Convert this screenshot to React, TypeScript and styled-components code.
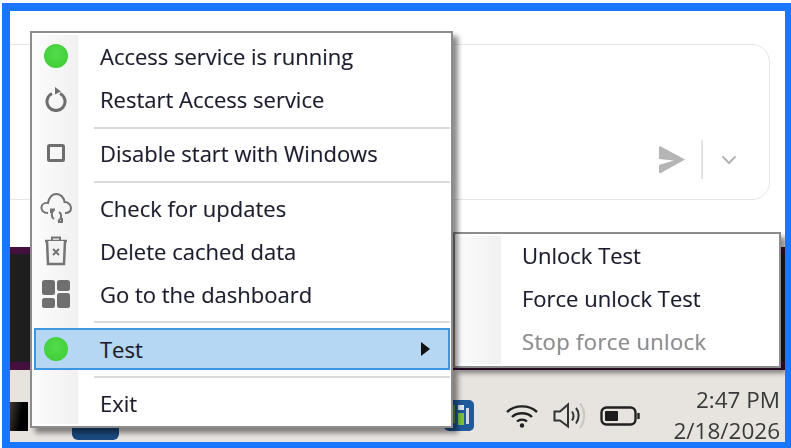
import React from "react";
import styled, { createGlobalStyle } from "styled-components";

const Global = createGlobalStyle`
  html, body { margin: 0; padding: 0; background: #fff; overflow: hidden; }
  body { width: 791px; height: 448px; font-family: "Open Sans", "Noto Sans", sans-serif; }
`;

const Frame = styled.div`
  position: relative;
  box-sizing: border-box;
  margin: 3px 0 0 2px;
  width: 789px;
  height: 445px;
  border: solid #1a75ff;
  border-width: 8px 6px 6px 8px;
  display: flex;
  flex-direction: column;
  overflow: hidden;
`;

const Content = styled.div`
  flex: 1;
  display: flex;
  flex-direction: column;
  position: relative;
  filter: blur(0.55px);
`;

const ChatArea = styled.div`
  height: 236px;
  flex: none;
  background: #fff;
  padding: 33px 15px 0 0;
  box-sizing: border-box;
`;

const Card = styled.div`
  box-sizing: border-box;
  height: 156px;
  margin-left: -20px;
  border: 1.5px solid #e6e6e6;
  border-radius: 18px;
  display: flex;
  align-items: flex-end;
  justify-content: flex-end;
  padding: 0 32px 20px 0;
`;

const Actions = styled.div`
  display: flex;
  align-items: center;
`;

const Divider = styled.div`
  width: 2px;
  height: 39px;
  margin: 0 18px 0 15px;
  background: #e4e4e4;
`;

const Desktop = styled.div`
  height: 123px;
  flex: none;
  box-sizing: border-box;
  background: #1e1e1e;
  border-top: 7px solid #43103f;
  border-bottom: 8px solid #43103f;
`;

const Taskbar = styled.div`
  flex: 1;
  background: #e7e3df;
  display: flex;
  align-items: flex-end;
  color: #3a3a3a;
`;

const Thumb = styled.div`
  width: 18px;
  height: 29px;
  margin-bottom: 11px;
  background: linear-gradient(100deg, #3a3a3a 0%, #000 60%);
  flex: none;
`;

const AppIcon = styled.div`
  width: 47px;
  height: 20px;
  margin: 0 0 2px 44px;
  background: #1b4a80;
  border-radius: 0 0 6px 6px;
  flex: none;
`;

const Tray = styled.div`
  margin-left: auto;
  display: flex;
  align-items: center;
  height: 72px;
`;

const TrayApp = styled.div`
  width: 30px;
  height: 31px;
  margin: 18px 32px 0 0;
  background: #1f5a9c;
  border-radius: 5px;
  display: flex;
  align-items: center;
  justify-content: center;
`;

const TrayIcon = styled.div<{ $gap: number }>`
  display: flex;
  margin: 20px ${(p) => p.$gap}px 0 0;
`;

const Clock = styled.div`
  margin-right: 5px;
  text-align: right;
  font-size: 22.5px;
  line-height: 31px;
  padding-top: 17px;
`;

const Menu = styled.div<{ $left: number; $top: number; $width: number; $z: number; $pad: string }>`
  position: absolute;
  left: ${(p) => p.$left}px;
  top: ${(p) => p.$top}px;
  width: ${(p) => p.$width}px;
  z-index: ${(p) => p.$z};
  box-sizing: border-box;
  padding: ${(p) => p.$pad};
  border: 2px solid #8c8c8c;
  background: #fff;
  box-shadow: 5px 5px 5px rgba(0, 0, 0, 0.45);
`;

const Gutter = styled.div`
  position: absolute;
  left: 0;
  top: 2px;
  bottom: 2px;
  width: 46px;
  background: linear-gradient(90deg, #fcfcfc, #f1f1f1);
`;

const Row = styled.div<{ $selected?: boolean; $disabled?: boolean }>`
  position: relative;
  box-sizing: border-box;
  height: ${(p) => (p.$selected ? 42 : 43)}px;
  margin: ${(p) => (p.$selected ? "0 1px 0 2px" : "0")};
  display: flex;
  align-items: center;
  font-size: 22px;
  letter-spacing: ${(p) => (p.$disabled ? 0.35 : 0)}px;
  color: ${(p) => (p.$disabled ? "#8f8f8f" : "#1c1c2c")};
  text-shadow: -0.5px 0 rgba(170, 80, 0, 0.22), 0.5px 0 rgba(0, 90, 200, 0.22);
  background: ${(p) => (p.$selected ? "#b5d7f3" : "transparent")};
  border: ${(p) => (p.$selected ? "2px solid #3d96e0" : "none")};
`;

const IconCell = styled.div<{ $selected?: boolean }>`
  width: ${(p) => (p.$selected ? 64 : 68)}px;
  flex: none;
  padding-right: ${(p) => (p.$selected ? 4 : 0)}px;
  display: flex;
  justify-content: center;
  box-sizing: border-box;
`;

const Dot = styled.div`
  width: 24px;
  height: 24px;
  margin-left: -21px;
  border-radius: 50%;
  background: radial-gradient(circle at 50% 40%, #52dc4a, #3ccb35);
`;

const Label = styled.span`
  white-space: nowrap;
`;

const SubLabel = styled.span`
  margin-left: 67px;
  padding-bottom: 2px;
  white-space: nowrap;
`;

const Arrow = styled.div`
  margin-left: auto;
  margin-right: 18px;
  width: 0;
  height: 0;
  border-left: 9px solid #111;
  border-top: 7px solid transparent;
  border-bottom: 7px solid transparent;
`;

const Separator = styled.div<{ $before: number; $after: number }>`
  height: 2px;
  margin: ${(p) => p.$before}px 1px ${(p) => p.$after}px 62px;
  background: #d9d9d9;
`;

const GlyphBox = styled.div`
  display: flex;
  margin-left: -21px;
  position: relative;
`;

const RestartIcon = () => (
  <svg width="24" height="26" viewBox="0 0 24 26" fill="none" stroke="#6e6e6e" strokeWidth="3">
    <path d="M8 7.5 A9 9 0 1 0 16 7.5" />
    <path d="M11 1 L17 5.5 L11 8.5 Z" fill="#6e6e6e" stroke="none" />
  </svg>
);

const SquareIcon = () => (
  <svg width="18" height="18" viewBox="0 0 18 18" fill="none" stroke="#6e6e6e" strokeWidth="3">
    <rect x="1.5" y="1.5" width="15" height="15" rx="1" />
  </svg>
);

const CloudIcon = () => (
  <svg width="32" height="32" viewBox="0 0 32 32" fill="none" stroke="#727272" strokeWidth="2">
    <path d="M8 21 C3 21 1 18 1.500 15 C2 12 5 10.500 8 11 C9 6 12 2 16.500 2 C21 2 24 6 24.500 10 C28 10 31 12.500 31 16 C31 19 29 21 25 21" />
    <path d="M14 18 C11 20 11 25 14 27 M11 21 L11 17.500 L15 17.500" />
    <path d="M19 20 C22 22 22 27 18 29 M22 26 L22 30 L18 30" />
  </svg>
);

const TrashIcon = () => (
  <svg width="24" height="30" viewBox="0 0 24 30" fill="none" stroke="#747474" strokeWidth="2.500">
    <path d="M1 5 H23" />
    <path d="M8 4 V1.500 H16 V4" strokeWidth="2" />
    <path d="M3 5 L4 28 H20 L21 5" fill="#f3f3f3" />
    <path d="M9 13 L15 19 M15 13 L9 19" strokeWidth="2" />
  </svg>
);

const DashIcon = () => (
  <svg width="28" height="28" viewBox="0 0 28 28" fill="#6f6f6f">
    <rect x="0" y="0" width="13" height="15" rx="2.500" />
    <rect x="15" y="0" width="13" height="11" rx="2.500" />
    <rect x="0" y="18" width="13" height="10" rx="2.500" />
    <rect x="15" y="13" width="13" height="15" rx="2.500" />
  </svg>
);

const SendIcon = () => (
  <svg width="28" height="28" viewBox="0 0 28 28" fill="#b5b5b5">
    <path d="M1 1.500 C1 0.500 1.800 0 2.800 0.400 L27 13.500 L2.800 27 C1.800 27.500 1 27 1 26 V19 L16 14.500 L1 13 Z" />
  </svg>
);

const ChevronIcon = () => (
  <svg width="16" height="10" viewBox="0 0 16 10" fill="none" stroke="#b5b5b5" strokeWidth="2">
    <path d="M1.500 1.500 L8 8 L14.500 1.500" />
  </svg>
);

const WifiIcon = () => (
  <svg width="32" height="24" viewBox="0 0 32 24" fill="none" stroke="#222" strokeWidth="2.400">
    <path d="M1 8 C9 0.500 23 0.500 31 8" />
    <path d="M6 13 C11 8 21 8 26 13" />
    <path d="M11 17.500 C13.500 15 18.500 15 21 17.500" />
    <circle cx="16" cy="21.500" r="2.200" fill="#222" stroke="none" />
  </svg>
);

const SpeakerIcon = () => (
  <svg width="33" height="30" viewBox="0 0 33 30" fill="none" stroke="#333" strokeWidth="2">
    <path d="M1.500 10.500 H7 L15 3.500 V25.500 L7 19.500 H1.500 Z" />
    <path d="M19 10.500 C21 13 21 17 19 19.500" />
    <path d="M23 7 C26.500 11 26.500 18 23 22.500" />
    <path d="M27 2.500 C32.500 9 32.500 20 27 27" stroke="#c9c6c3" />
  </svg>
);

const BatteryIcon = () => (
  <svg width="40" height="20" viewBox="0 0 40 20" fill="none">
    <rect x="1.500" y="1.500" width="34" height="17" rx="5" stroke="#222" strokeWidth="2.400" />
    <rect x="5" y="5" width="13" height="10" rx="1" fill="#1c1c1c" />
    <path d="M38.500 7 V13" stroke="#222" strokeWidth="2.400" />
  </svg>
);

const TrayAppIcon = () => (
  <svg width="30" height="31" viewBox="0 0 30 31">
    <rect x="4" y="5" width="7" height="18" fill="#6e9f3b" />
    <rect x="14" y="5" width="6" height="5" fill="#dfe8ee" />
    <rect x="14" y="13" width="6" height="12" fill="#7fc241" />
    <rect x="22" y="8" width="3" height="16" fill="#cfdbe6" />
  </svg>
);

const mainRows = [
  { label: "Access service is running", icon: <Dot /> },
  { label: "Restart Access service", icon: <GlyphBox><RestartIcon /></GlyphBox> },
];

const tools = [
  { label: "Check for updates", icon: <GlyphBox><CloudIcon /></GlyphBox> },
  { label: "Delete cached data", icon: <GlyphBox><TrashIcon /></GlyphBox> },
  { label: "Go to the dashboard", icon: <GlyphBox><DashIcon /></GlyphBox> },
];

const subRows = [
  { label: "Unlock Test", disabled: false },
  { label: "Force unlock Test", disabled: false },
  { label: "Stop force unlock", disabled: true },
];

export default function App() {
  return (
    <>
      <Global />
      <Frame>
        <Content>
          <ChatArea>
            <Card>
              <Actions>
                <SendIcon />
                <Divider />
                <ChevronIcon />
              </Actions>
            </Card>
          </ChatArea>
          <Desktop />
          <Taskbar>
            <Thumb />
            <AppIcon />
            <Tray>
              <TrayApp><TrayAppIcon /></TrayApp>
              <TrayIcon $gap={15}><WifiIcon /></TrayIcon>
              <TrayIcon $gap={14}><SpeakerIcon /></TrayIcon>
              <TrayIcon $gap={33}><BatteryIcon /></TrayIcon>
              <Clock>2:47 PM<br />2/18/2026</Clock>
            </Tray>
          </Taskbar>

          <Menu $left={20} $top={20} $width={423} $z={2} $pad="1px 0 2px">
            <Gutter />
            {mainRows.map((r) => (
              <Row key={r.label}>
                <IconCell>{r.icon}</IconCell>
                <Label>{r.label}</Label>
              </Row>
            ))}
            <Separator $before={7} $after={2} />
            <Row>
              <IconCell><GlyphBox><SquareIcon /></GlyphBox></IconCell>
              <Label>Disable start with Windows</Label>
            </Row>
            <Separator $before={7} $after={3} />
            {tools.map((r) => (
              <Row key={r.label}>
                <IconCell>{r.icon}</IconCell>
                <Label>{r.label}</Label>
              </Row>
            ))}
            <Separator $before={6} $after={5} />
            <Row $selected>
              <IconCell $selected><Dot /></IconCell>
              <Label>Test</Label>
              <Arrow />
            </Row>
            <Separator $before={6} $after={3} />
            <Row>
              <IconCell />
              <Label>Exit</Label>
            </Row>
          </Menu>

          <Menu $left={443} $top={221} $width={328} $z={1} $pad="0 0 3px">
            <Gutter />
            {subRows.map((r) => (
              <Row key={r.label} $disabled={r.disabled}>
                <SubLabel>{r.label}</SubLabel>
              </Row>
            ))}
          </Menu>
        </Content>
      </Frame>
    </>
  );
}
